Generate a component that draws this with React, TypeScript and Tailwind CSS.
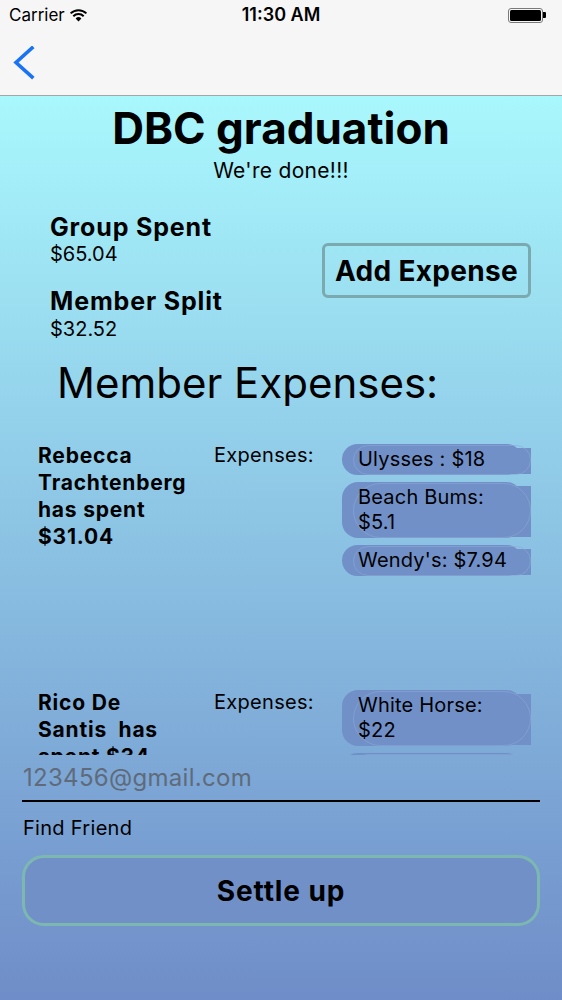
import React from "react";

const font = { fontFamily: "Inter, 'Noto Sans', sans-serif" };

function Chip({ lines }: { lines: string[] }) {
  return (
    <div className="relative w-[180px]">
      <div className="absolute left-[20px] right-[-9px] top-[4px] bottom-[1px] bg-[#7190c8]" />
      <div className="relative rounded-[16px] bg-[#7190c8] pl-[16px] pr-[4px] py-[3px] text-[20px] leading-[25px] tracking-[0.2px] text-black">
        <div className="absolute left-[11px] right-[-9px] top-[1px] bottom-[0px] rounded-full border border-[#8ea8d6]/60" />
        {lines.map((l, i) => (
          <div key={i} className="relative whitespace-pre">{l}</div>
        ))}
      </div>
    </div>
  );
}

function MemberRow({ name, chips, chipTop }: { name: string[]; chips: string[][]; chipTop: string }) {
  return (
    <div className="flex h-[247px] shrink-0">
      <div className="w-[176px] pl-[38px] text-[21px] font-bold leading-[27px] tracking-[0.8px] text-black">
        {name.map((n, i) => (
          <div key={i} className="whitespace-pre">{n}</div>
        ))}
      </div>
      <div className="w-[166px] pl-[38px] pt-[1px] text-[20px] leading-[24px] tracking-[0.3px] text-black">Expenses:</div>
      <div className={`flex flex-col gap-[7px] ${chipTop}`}>
        {chips.map((c, i) => (
          <Chip key={i} lines={c} />
        ))}
      </div>
    </div>
  );
}

export default function App() {
  return (
    <div className="w-[562px] h-[1000px] flex flex-col overflow-hidden" style={font}>
      {/* status bar */}
      <div className="h-[30px] bg-[#f6f6f6] flex items-center px-[9px] relative">
        <div className="flex items-center gap-[4px]">
          <span className="text-[17px] text-black leading-none">Carrier</span>
          <svg width="19" height="14" viewBox="0 0 19 14">
            <path d="M9.5 13.5 L6.6 10.4 A4.2 4.2 0 0 1 12.4 10.4 Z" fill="#000" />
            <path d="M4.3 8.2 A7.4 7.4 0 0 1 14.7 8.2" stroke="#000" strokeWidth="2" fill="none" />
            <path d="M1.6 5.4 A11.2 11.2 0 0 1 17.4 5.4" stroke="#000" strokeWidth="2" fill="none" />
          </svg>
        </div>
        <div className="absolute left-0 right-0 top-0 h-[30px] flex items-center justify-center pointer-events-none">
          <span className="text-[18px] font-semibold text-black leading-none">11:30 AM</span>
        </div>
        <div className="ml-auto mr-[7px] flex items-center">
          <div className="w-[35px] h-[15px] rounded-[3px] border border-[#7a7a7a] p-[1px]">
            <div className="w-full h-full bg-black rounded-[1.5px]" />
          </div>
          <div className="w-[3px] h-[6px] bg-black rounded-r-[1px]" />
        </div>
      </div>
      {/* nav bar */}
      <div className="h-[66px] bg-[#f6f6f6] border-b border-[#a6a6a6] flex items-center pl-[13px]">
        <svg width="22" height="34" viewBox="0 0 22 34">
          <path d="M19 2 L3 16.5 L19 31" stroke="#1873f5" strokeWidth="3.6" fill="none" strokeLinecap="square" />
        </svg>
      </div>
      {/* content */}
      <div className="flex-1 flex flex-col bg-gradient-to-b from-[#a9f8fd] to-[#6f8dc8]">
        <div className="mt-[8px] text-center text-[44px] font-bold leading-[48px] text-black">DBC graduation</div>
        <div className="mt-[7px] text-center text-[21px] leading-[24px] tracking-[0.3px] text-black">We're done!!!</div>
        <div className="mt-[30px] flex">
          <div className="pl-[50px] w-[322px]">
            <div className="text-[25px] font-bold leading-[28px] tracking-[0.85px] text-black">Group Spent</div>
            <div className="mt-[1px] text-[20px] leading-[24px] text-black">$65.04</div>
            <div className="mt-[21px] text-[25px] font-bold leading-[28px] tracking-[0.85px] text-black">Member Split</div>
            <div className="mt-[2px] text-[20px] leading-[24px] text-black">$32.52</div>
          </div>
          <div className="mt-[30px] w-[209px] h-[55px] rounded-[6px] border-[3px] border-[#7aa9b0] flex items-center justify-center text-[28px] font-bold text-black leading-none tracking-[0.3px]">
            Add Expense
          </div>
        </div>
        <div className="mt-[18px] pl-[57px] text-[42px] leading-[48px] text-black">Member Expenses:</div>
        <div className="mt-[35px] h-[313px] overflow-hidden flex flex-col">
          <MemberRow
            name={["Rebecca", "Trachtenberg", "has spent", "$31.04"]}
            chips={[["Ulysses : $18"], ["Beach Bums:", "$5.1"], ["Wendy's: $7.94"]]}
            chipTop="pt-[2px]"
          />
          <MemberRow
            name={["Rico De", "Santis  has", "spent $34"]}
            chips={[["White Horse:", "$22"], ["Taco Bell: $12"]]}
            chipTop="pt-[1px]"
          />
        </div>
        <div className="mx-[22px] mt-[9px] pb-[8px] border-b-2 border-black">
          <div className="pl-[1px] text-[24px] leading-[28px] tracking-[0.3px] text-[#5f6b7a]">123456@gmail.com</div>
        </div>
        <div className="mt-[14px] pl-[23px] text-[20px] leading-[24px] tracking-[0.3px] text-black">Find Friend</div>
        <div className="mt-[15px] mx-[22px] h-[71px] rounded-[22px] border-[3px] border-[#7db8b0] bg-[#7190c8] flex items-center justify-center text-[28px] font-bold text-black leading-none tracking-[0.9px]">
          Settle up
        </div>
      </div>
    </div>
  );
}
